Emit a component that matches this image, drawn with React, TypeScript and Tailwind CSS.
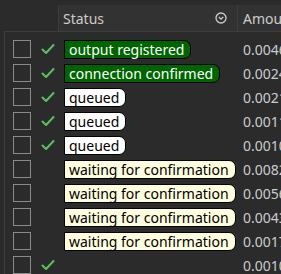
import React from 'react';

type Row = {
  status: string;
  kind: 'green' | 'white' | 'yellow' | 'none';
  done: boolean;
  amount: string;
};

const rows: Row[] = [
  { status: 'output registered', kind: 'green', done: true, amount: '0.00463' },
  { status: 'connection confirmed', kind: 'green', done: true, amount: '0.00241' },
  { status: 'queued', kind: 'white', done: true, amount: '0.00213' },
  { status: 'queued', kind: 'white', done: true, amount: '0.00118' },
  { status: 'queued', kind: 'white', done: true, amount: '0.00106' },
  { status: 'waiting for confirmation', kind: 'yellow', done: false, amount: '0.00824' },
  { status: 'waiting for confirmation', kind: 'yellow', done: false, amount: '0.00560' },
  { status: 'waiting for confirmation', kind: 'yellow', done: false, amount: '0.00432' },
  { status: 'waiting for confirmation', kind: 'yellow', done: false, amount: '0.00175' },
  { status: '', kind: 'none', done: true, amount: '0.00106' },
];

const badgeClass = {
  green: 'bg-[#006400] text-white',
  white: 'bg-white text-black',
  yellow: 'bg-[#ffffe0] text-black',
  none: '',
};

function Check() {
  return (
    <svg width="14" height="12" viewBox="0 0 14 12" fill="none">
      <path d="M1.5 6.5 L5 10 L12.5 2" stroke="#5fbf5f" strokeWidth="2" strokeLinecap="round" strokeLinejoin="round" />
    </svg>
  );
}

export default function App() {
  return (
    <div className="w-[281px] h-[274px] overflow-hidden bg-[#2b2b2b] text-[14px] text-[#cccccc]" style={{ fontFamily: '"Noto Sans", sans-serif' }}>
      <div className="flex pt-[5px] h-[31px]">
        <div className="w-[58px] shrink-0" />
        <div className="w-[180px] shrink-0 flex items-center justify-between bg-[#323232] border-l border-r border-[#3d3d3d] pl-[4px] pr-[10px]">
          <span>Status</span>
          <svg width="12" height="12" viewBox="0 0 12 12" fill="none">
            <circle cx="6" cy="6" r="5" stroke="#cccccc" strokeWidth="1.3" />
            <path d="M3.8 5 L6 7.2 L8.2 5" stroke="#cccccc" strokeWidth="1.3" />
          </svg>
        </div>
        <div className="flex-1 min-w-0 overflow-hidden flex items-center bg-[#323232] pl-[5px]">
          <span className="whitespace-nowrap">Amount</span>
        </div>
      </div>
      <div className="ml-[4px] border-l border-t border-[#3d3d3d] pt-[5px]">
        {rows.map((r, i) => (
          <div key={i} className="flex items-center h-[24px]">
            <div className="w-[18px] h-[18px] border border-[#8a8a8a] ml-[8px] shrink-0" />
            <div className="w-[33px] shrink-0 flex justify-center">{r.done && <Check />}</div>
            <div className="w-[173px] shrink-0 flex items-center">
              {r.kind !== 'none' && (
                <span className={`${badgeClass[r.kind]} h-[19px] leading-[17px] border border-black rounded-r-[7px] pl-[4px] pr-[6px] whitespace-nowrap`}>
                  {r.status}
                </span>
              )}
            </div>
            <div className="pl-[6px] whitespace-nowrap">{r.amount}</div>
          </div>
        ))}
      </div>
    </div>
  );
}
